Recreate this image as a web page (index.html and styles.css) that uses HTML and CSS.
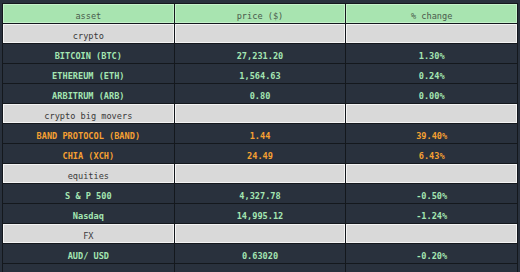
FILE: index.html
```html
<!DOCTYPE html>
<html>
<head>
<meta charset="utf-8">
<link rel="stylesheet" href="styles.css">
</head>
<body>
<table class="tbl">
  <colgroup><col><col><col></colgroup>
  <thead>
    <tr class="head"><th>asset</th><th>price ($)</th><th>% change</th></tr>
  </thead>
  <tbody>
    <tr class="group"><td>crypto</td><td></td><td></td></tr>
    <tr class="row"><td>BITCOIN (BTC)</td><td>27,231.20</td><td>1.30%</td></tr>
    <tr class="row"><td>ETHEREUM (ETH)</td><td>1,564.63</td><td>0.24%</td></tr>
    <tr class="row"><td>ARBITRUM (ARB)</td><td>0.80</td><td>0.00%</td></tr>
    <tr class="group"><td>crypto big movers</td><td></td><td></td></tr>
    <tr class="row hot"><td>BAND PROTOCOL (BAND)</td><td>1.44</td><td>39.40%</td></tr>
    <tr class="row hot"><td>CHIA (XCH)</td><td>24.49</td><td>6.43%</td></tr>
    <tr class="group"><td>equities</td><td></td><td></td></tr>
    <tr class="row"><td>S &amp; P 500</td><td>4,327.78</td><td>-0.50%</td></tr>
    <tr class="row"><td>Nasdaq</td><td>14,995.12</td><td>-1.24%</td></tr>
    <tr class="group"><td>FX</td><td></td><td></td></tr>
    <tr class="row"><td>AUD/ USD</td><td>0.63020</td><td>-0.20%</td></tr>
    <tr class="row"><td>&nbsp;</td><td></td><td></td></tr>
  </tbody>
</table>
</body>
</html>
```
FILE: styles.css
```css
html, body {
  background: #29313d;
}
body {
  margin: 3px 0 0 2px;
  overflow: hidden;
}
.tbl {
  width: 516px;
  table-layout: fixed;
  border-collapse: separate;
  border-spacing: 1px;
  background: #14181d;
  font-family: "DejaVu Sans Mono", "Liberation Mono", monospace;
  font-size: 8.6px;
  font-weight: bold;
}
.tbl th, .tbl td {
  height: 11px;
  line-height: 11px;
  padding: 6px 2px 0 2px;
  text-align: center;
  white-space: nowrap;
  border: 1px solid #29313d;
  background: #29313d;
}
.head th {
  background: #a8e4b0;
  border-color: #c6f2cb;
  color: #4a5a4c;
  font-weight: normal;
}
.group td {
  background: #d9d9d9;
  border-color: #f4f4f4;
  color: #3a3a3a;
  font-weight: normal;
}
.row td {
  color: #a4e6b2;
}
.row.hot td {
  color: #f5a032;
}
```
